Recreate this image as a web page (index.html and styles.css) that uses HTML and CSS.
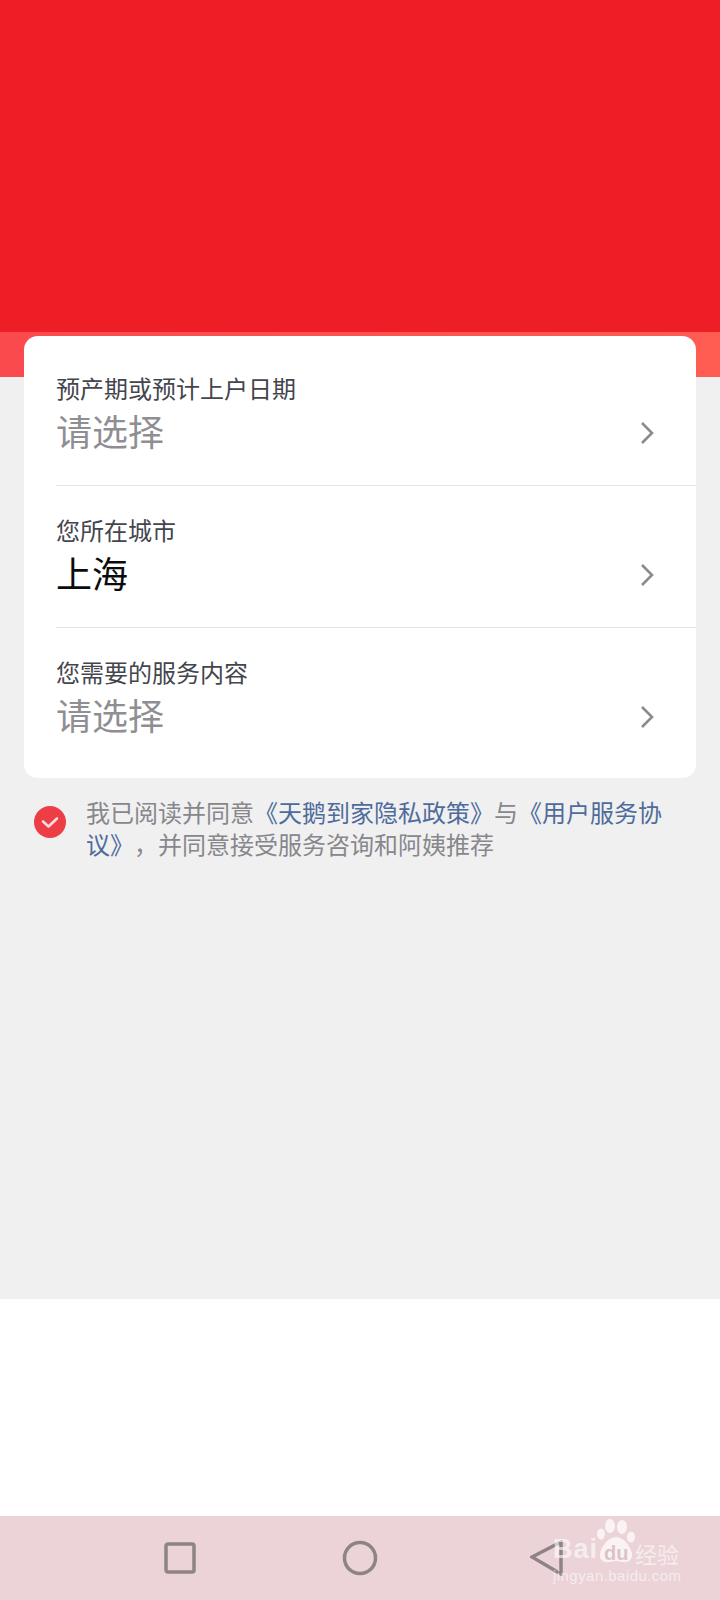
FILE: index.html
```html
<!DOCTYPE html>
<html lang="zh-CN">
<head>
    <meta charset="UTF-8">
    <meta name="viewport" content="width=device-width, initial-scale=1.0">
    <title>预约服务</title>
    <link rel="stylesheet" href="styles.css">
</head>
<body>
    <div class="hero"></div>
    <div class="band"></div>
    <div class="main">
        <div class="card">
            <div class="row">
                <div class="row-text">
                    <div class="label">预产期或预计上户日期</div>
                    <div class="value placeholder">请选择</div>
                </div>
                <svg class="chevron" width="14" height="22" viewBox="0 0 14 22"><path d="M2 1l10 10L2 21"/></svg>
            </div>
            <div class="row">
                <div class="row-text">
                    <div class="label">您所在城市</div>
                    <div class="value">上海</div>
                </div>
                <svg class="chevron" width="14" height="22" viewBox="0 0 14 22"><path d="M2 1l10 10L2 21"/></svg>
            </div>
            <div class="row">
                <div class="row-text">
                    <div class="label">您需要的服务内容</div>
                    <div class="value placeholder">请选择</div>
                </div>
                <svg class="chevron" width="14" height="22" viewBox="0 0 14 22"><path d="M2 1l10 10L2 21"/></svg>
            </div>
        </div>
        <div class="agree">
            <svg class="check" width="32" height="32" viewBox="0 0 32 32">
                <circle cx="16" cy="16" r="16" fill="#ee3e45"/>
                <path d="M9 15.500l5.500 5 8.500-8" fill="none" stroke="#fbdcdc" stroke-width="2.600" stroke-linecap="round" stroke-linejoin="round"/>
            </svg>
            <p>我已阅读并同意<a href="#">《天鹅到家隐私政策》</a>与<a href="#">《用户服务协议》</a>，并同意接受服务咨询和阿姨推荐</p>
        </div>
    </div>
    <div class="blank"></div>
    <div class="navbar">
        <svg class="nav-square" width="32" height="32" viewBox="0 0 32 32"><rect x="2" y="2" width="28" height="28" rx="2"/></svg>
        <svg class="nav-circle" width="36" height="36" viewBox="0 0 36 36"><circle cx="18" cy="18" r="15.500"/></svg>
        <svg class="nav-back" width="34" height="36" viewBox="0 0 34 36"><path d="M2 17L31 2v32z"/></svg>
    </div>

    <!-- watermark lies over the nav bar -->
    <div class="watermark">
        <div class="wm-top">
            <span class="wm-bai">Bai</span>
            <svg class="wm-paw" width="42" height="52" viewBox="0 0 42 52">
                <ellipse cx="6" cy="18" rx="4" ry="5.500"/>
                <ellipse cx="15" cy="10" rx="5" ry="7"/>
                <ellipse cx="27" cy="11" rx="5" ry="7"/>
                <ellipse cx="36" cy="21" rx="4" ry="5.500"/>
                <path d="M21 21c7 0 14 8 16 16 1 7-4 10-9 9-4-1-10-1-14 0-5 1-10-2-9-8 1-8 9-17 16-17z"/>
            </svg>
            <span class="wm-du">du</span>
            <span class="wm-cn">经验</span>
        </div>
        <div class="wm-url">jingyan.baidu.com</div>
    </div>
</body>
</html>
```

FILE: styles.css
```css
* {
    box-sizing: border-box;
}

body {
    margin: 0;
    width: 720px;
    height: 1600px;
    position: relative;
    overflow: hidden;
    background-color: white;
    font-family: "Noto Sans CJK SC", "Liberation Sans", sans-serif;
    text-spacing-trim: space-all;
}

.hero {
    height: 332px;
    background-color: #ee1e26;
}

.band {
    height: 45px;
    background: linear-gradient(90deg, #fb4a4e, #ff5c52);
}

.main {
    display: flow-root;
    height: 922px;
    padding: 0 24px;
    background-color: #f0f0f1;
}

.card {
    margin-top: -41px;
    position: relative;
    background-color: white;
    border-radius: 14px;
}

.row {
    display: flex;
    align-items: center;
    justify-content: space-between;
    margin-left: 32px;
    padding: 28px 42px 31px 0;
    border-bottom: 1px solid #e4e4e6;
}

.row:first-child {
    padding-top: 36px;
}

.row:last-child {
    padding-bottom: 40px;
    border-bottom: none;
}

.label {
    font-size: 24px;
    line-height: 32px;
    color: #44454d;
}

.value {
    margin-top: 2px;
    font-size: 36px;
    line-height: 48px;
    color: #0b0b0b;
}

.placeholder {
    color: #8e8e93;
}

.chevron {
    margin-top: 39px;
}

.chevron path {
    fill: none;
    stroke: #8b8b8f;
    stroke-width: 2.600;
}

.agree {
    display: flex;
    align-items: flex-start;
    margin-top: 18px;
    padding-left: 10px;
}

.check {
    flex: none;
    margin-top: 10px;
}

.agree p {
    width: 590px;
    margin: 0 0 0 20px;
    font-size: 24px;
    line-height: 32px;
    color: #87878c;
}

.agree a {
    color: #4e6c9b;
    text-decoration: none;
}

.blank {
    height: 217px;
}

.navbar {
    display: flex;
    align-items: center;
    height: 84px;
    padding-left: 164px;
    background-color: #ebd3d8;
}

.navbar svg {
    flex: none;
    fill: none;
    stroke: #8f8485;
    stroke-width: 3.500;
}

.nav-circle {
    margin-left: 146px;
}

.nav-back {
    margin-left: 152px;
}

.watermark {
    position: absolute;
    left: 553px;
    top: 1516px;
    width: 130px;
    color: rgba(255, 255, 255, 0.6);
    font-family: "Liberation Sans", "Noto Sans CJK SC", sans-serif;
}

.wm-top {
    position: relative;
    height: 50px;
    display: flex;
    align-items: flex-end;
}

.wm-bai {
    font-size: 27px;
    line-height: 30px;
    font-weight: bold;
    letter-spacing: 1px;
    padding-bottom: 2px;
}

.wm-paw {
    position: absolute;
    left: 42px;
    top: 0;
    fill: rgba(255, 255, 255, 0.72);
}

.wm-du {
    position: absolute;
    left: 51px;
    top: 27px;
    font-size: 20px;
    line-height: 20px;
    font-weight: bold;
    color: #dcc3c8;
}

.wm-cn {
    position: absolute;
    left: 82px;
    top: 23px;
    font-family: "Noto Sans CJK SC", sans-serif;
    font-size: 22px;
    line-height: 28px;
    white-space: nowrap;
}

.wm-url {
    font-size: 15px;
    line-height: 20px;
    letter-spacing: 0.450px;
    white-space: nowrap;
}
```
